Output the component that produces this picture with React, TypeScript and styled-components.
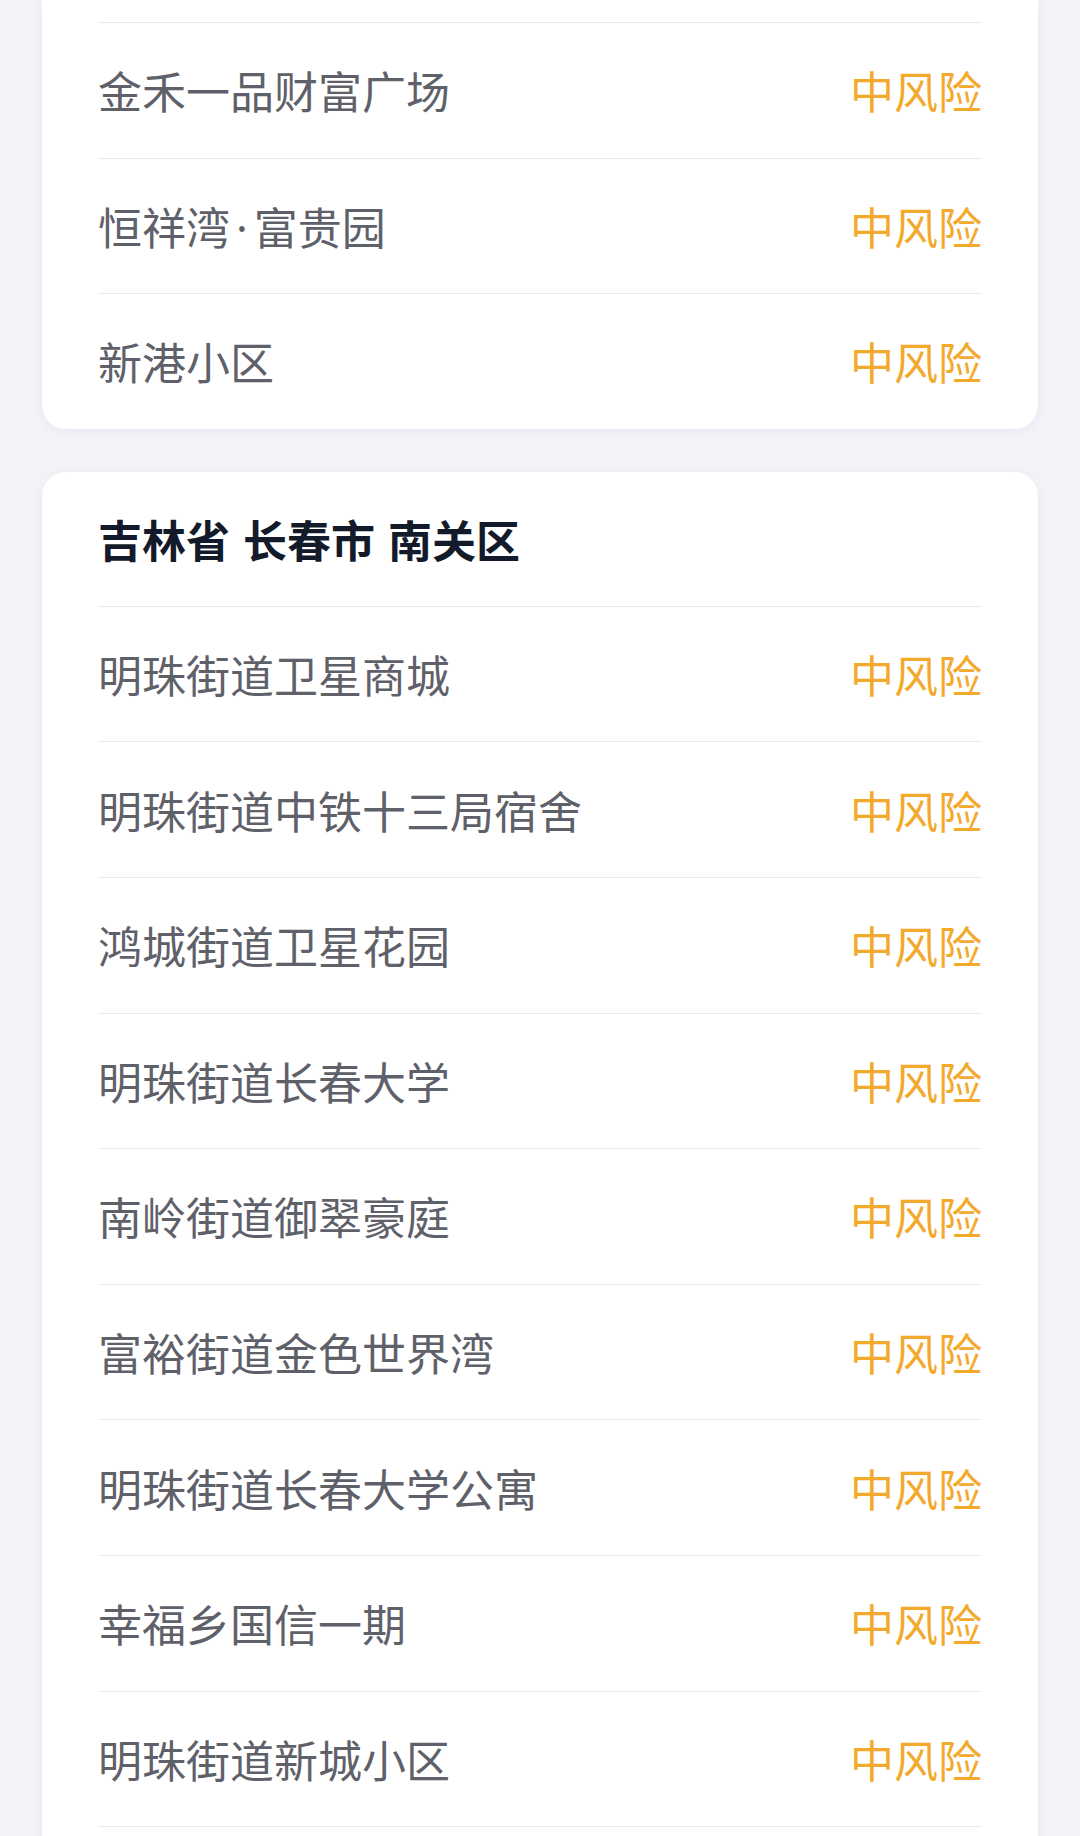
import React from "react"
import styled, { createGlobalStyle } from "styled-components"

const GlobalStyle = createGlobalStyle`
  html, body {
    margin: 0;
    padding: 0;
    background: #f3f4f8;
  }
  body {
    font-family: "Noto Sans CJK SC", "Noto Sans", sans-serif;
  }
`

const areas = [
  {
    title: "",
    clipped: true,
    items: ["金禾一品财富广场", "恒祥湾·富贵园", "新港小区"],
  },
  {
    title: "吉林省 长春市 南关区",
    clipped: false,
    items: [
      "明珠街道卫星商城",
      "明珠街道中铁十三局宿舍",
      "鸿城街道卫星花园",
      "明珠街道长春大学",
      "南岭街道御翠豪庭",
      "富裕街道金色世界湾",
      "明珠街道长春大学公寓",
      "幸福乡国信一期",
      "明珠街道新城小区",
      "",
    ],
  },
]

// the middle dot is drawn half width in the original, so it gets its own font
const renderName = (name: string) => {
  const parts = name.split("·")
  return parts.map((part, i) => (
    <React.Fragment key={i}>
      {i > 0 && <Dot>·</Dot>}
      {part}
    </React.Fragment>
  ))
}

const App = () => {
  return (
    <Page>
      <GlobalStyle />
      {areas.map((area, index) => (
        <Card key={index} $clipped={area.clipped}>
          {area.title && <Header>{area.title}</Header>}
          {area.items.map((name, i) => (
            <Row key={i}>
              <Name>{renderName(name)}</Name>
              {name && <Risk>中风险</Risk>}
            </Row>
          ))}
        </Card>
      ))}
    </Page>
  )
}

const Page = styled.div`
  display: flex;
  flex-direction: column;
  gap: 43px;
  padding: 0 42px;
  height: 1836px;
  overflow: hidden;
`
const Card = styled.div<{ $clipped: boolean }>`
  background: #ffffff;
  border-radius: ${(p) => (p.$clipped ? "0 0 24px 24px" : "24px")};
  padding: ${(p) => (p.$clipped ? "22px 56px 0" : "0 56px")};
  box-shadow: 0 2px 14px rgba(30, 40, 70, 0.05);
  flex-shrink: 0;
`
const Header = styled.div`
  height: 134px;
  display: flex;
  align-items: center;
  font-size: 44px;
  font-weight: 700;
  color: #131b2a;
  white-space: pre;
  word-spacing: 3px;
`
const Row = styled.div`
  box-sizing: border-box;
  height: 135.6px;
  display: flex;
  align-items: center;
  justify-content: space-between;
  border-top: 1.5px solid #e9eaee;
`
const Name = styled.span`
  font-size: 44px;
  color: #5f616a;
`
const Dot = styled.span`
  font-family: "Noto Sans", sans-serif;
  margin: 0 6px;
`
const Risk = styled.span`
  font-size: 44px;
  color: #f3a92c;
`

export default App
